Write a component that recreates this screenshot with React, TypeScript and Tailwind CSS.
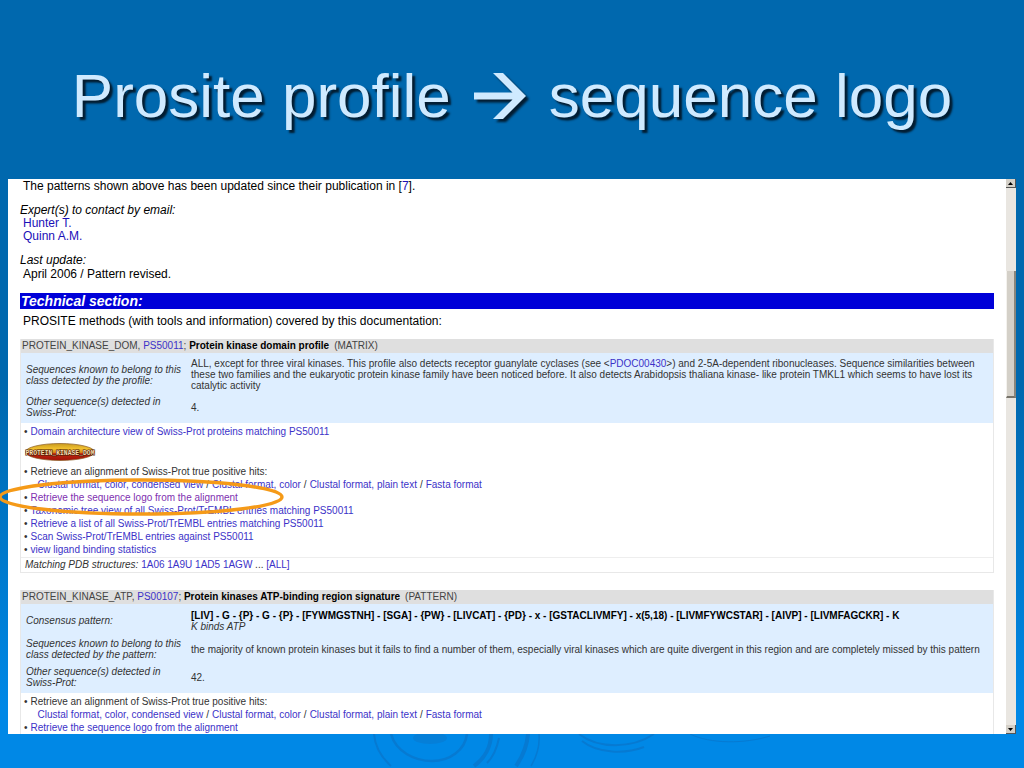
import React from "react";

function Link({ children, tone = "text-[#3c32c8]" }: { children: React.ReactNode; tone?: string }) {
  return (
    <a href="#" className={tone}>
      {children}
    </a>
  );
}

function SectionHeader({ id, accession, name, kind }: { id: string; accession: string; name: string; kind: string }) {
  return (
    <h2 className="flex h-[14px] items-center gap-[5px] whitespace-nowrap bg-[#dfdfdf] pl-px text-[10px] leading-[12px] text-[#444]">
      <span>
        {id}, <Link>{accession}</Link>; <b className="text-black">{name}</b>
      </span>
      <span>({kind})</span>
    </h2>
  );
}

function Row({ label, children, height }: { label: string; children: React.ReactNode; height: string }) {
  return (
    <tr className={height}>
      <th scope="row" className="w-[170px] py-0 pl-[5px] pr-1 text-left align-middle font-normal italic">
        {label}
      </th>
      <td className="py-0 pr-2 align-middle">{children}</td>
    </tr>
  );
}

function Bullet({ children }: { children: React.ReactNode }) {
  return (
    <li className="flex gap-[3px]">
      <span>•</span>
      <span>{children}</span>
    </li>
  );
}

function Formats() {
  return (
    <div className="flex gap-[3px] pl-[7px]">
      <Link>Clustal format, color, condensed view</Link>
      <span>/</span>
      <Link>Clustal format, color</Link>
      <span>/</span>
      <Link>Clustal format, plain text</Link>
      <span>/</span>
      <Link>Fasta format</Link>
    </div>
  );
}

function DomainPill() {
  return (
    <svg width="72" height="18" viewBox="0 0 72 18" role="img" aria-label="Protein kinase domain">
      <defs>
        <linearGradient id="pill" x1="0" y1="0" x2="0" y2="1">
          <stop offset="0" stopColor="#c89a20" />
          <stop offset="0.3" stopColor="#f0c030" />
          <stop offset="0.52" stopColor="#d88a18" />
          <stop offset="0.6" stopColor="#c02a10" />
          <stop offset="1" stopColor="#a01008" />
        </linearGradient>
      </defs>
      <ellipse cx="36" cy="9" rx="34.5" ry="8.5" fill="url(#pill)" stroke="#8a5a20" strokeWidth="0.7" />
      <text x="36" y="11.5" textAnchor="middle" fontFamily="Liberation Mono, monospace" fontWeight="bold" fontSize="6.4" fill="#f6dcae" stroke="#4a1c08" strokeWidth="1.2" paintOrder="stroke">
        PROTEIN_KINASE_DOM
      </text>
    </svg>
  );
}

function Arrow() {
  return (
    <svg width="52" height="50" viewBox="0 0 52 50" role="img" aria-label="to" className="overflow-visible drop-shadow-[3px_3px_1px_#021c30]">
      <path d="M19 2H29L52 25L29 48H19L38.5 28.5H0V21.5H38.5Z" fill="#cfeaff" />
    </svg>
  );
}

function Scrollbar() {
  return (
    <div className="flex w-2.5 shrink-0 flex-col bg-[#e9e6e1]">
      <button aria-label="Scroll up" className="flex h-[9px] items-center justify-center border-b border-r border-[#555] bg-[#d4d0c8]">
        <svg width="5" height="3" viewBox="0 0 5 3"><path d="M0 3L2.5 0L5 3Z" /></svg>
      </button>
      <div className="grow-[83]" />
      <div className="grow-[126] border-b-2 border-l border-r-2 border-b-[#77736a] border-l-[#f4f2ee] border-r-[#8a867c] bg-[#d4d0c8]" />
      <div className="grow-[328]" />
      <button aria-label="Scroll down" className="flex h-[9px] items-center justify-center border-b border-r border-[#555] bg-[#d4d0c8]">
        <svg width="5" height="3" viewBox="0 0 5 3"><path d="M0 0L2.5 3L5 0Z" /></svg>
      </button>
    </div>
  );
}

function Ripples() {
  return (
    <svg viewBox="0 0 684 34" preserveAspectRatio="xMidYMin slice" className="ml-[340px] h-full w-[684px]" fill="none" stroke="#067ad2" aria-hidden="true">
      <ellipse cx="90" cy="4" rx="17" ry="6" fill="#057fd8" stroke="none" />
      <path d="M51 0C56 18 75 27 92 27C110 27 125 16 127 0" strokeWidth="2.5" />
      <path d="M34 0C35 13 42 24 51 32" strokeWidth="2" />
      <path d="M151 0C151 12 145 24 134 32" strokeWidth="4" />
      <path d="M159 4C157 14 153 23 147 29" strokeWidth="2" />
      <path d="M188 0C187 12 183 22 176 32" strokeWidth="4" />
      <path d="M199 0C200 12 197 22 191 32" strokeWidth="1.5" />
      <path d="M239 0C258 15 292 15 314 0" strokeWidth="2" />
      <path d="M242 7C258 20 286 20 304 13" strokeWidth="2" />
      <path d="M350 0C370 10 405 10 430 2" strokeWidth="1" />
    </svg>
  );
}

export default function App() {
  return (
    <div className="relative flex h-screen flex-col overflow-hidden bg-[linear-gradient(to_bottom,#0068ae_0%,#0068ae_50%,#0088e6_92%,#0088e6_100%)] px-2 font-['Liberation_Sans',Arial,sans-serif]">
      <h1 className="flex h-[179px] shrink-0 items-center justify-center gap-[23px] whitespace-nowrap pt-3 text-[62px] leading-none text-[#cfeaff] [text-shadow:3px_3px_2px_#021c30]">
        <span>Prosite profile</span>
        <Arrow />
        <span>sequence logo</span>
      </h1>

      <main className="flex min-h-0 flex-1 bg-white">
        <div className="min-w-0 flex-1 overflow-hidden px-3">
          <div className="text-[12px] leading-[14px] text-black">
            <p className="mb-2.5 pl-[3px]">
              The patterns shown above has been updated since their publication in [<Link tone="text-[#1a10b8]">7</Link>].
            </p>
            <p className="italic">Expert(s) to contact by email:</p>
            <ul className="mb-2.5 pl-[3px] leading-[13px]">
              <li><Link tone="text-[#1a10b8]">Hunter T.</Link></li>
              <li><Link tone="text-[#1a10b8]">Quinn A.M.</Link></li>
            </ul>
            <p className="italic">Last update:</p>
            <p className="mb-3 pl-[3px]">April 2006 / Pattern revised.</p>
          </div>
          <h2 className="h-4 bg-[#0000d8] pl-px text-[14px] font-bold italic leading-4 text-white">Technical section:</h2>
          <p className="mb-[11px] mt-[5px] pl-[3px] text-[12px] leading-[14px] text-black">
            PROSITE methods (with tools and information) covered by this documentation:
          </p>

          <section className="mb-[17px] border border-t-0 border-[#e8e8e8] text-[10px] text-[#333]">
            <SectionHeader id="PROTEIN_KINASE_DOM" accession="PS50011" name="Protein kinase domain profile" kind="MATRIX" />
            <div className="bg-[#deeeff] pb-[5px]">
              <table className="w-full border-collapse leading-[11px]">
                <tbody>
                  <Row label="Sequences known to belong to this class detected by the profile:" height="h-[43px]">
                    ALL, except for three viral kinases. This profile also detects receptor guanylate cyclases (see &lt;<Link>PDOC00430</Link>&gt;) and 2-5A-dependent ribonucleases. Sequence similarities between these two families and the eukaryotic protein kinase family have been noticed before. It also detects Arabidopsis thaliana kinase- like protein TMKL1 which seems to have lost its catalytic activity
                  </Row>
                  <Row label="Other sequence(s) detected in Swiss-Prot:" height="h-[22px]">4.</Row>
                </tbody>
              </table>
            </div>
            <ul className="pl-[3px] pt-0.5 leading-[13px]">
              <Bullet><Link>Domain architecture view of Swiss-Prot proteins matching PS50011</Link></Bullet>
              <li className="flex h-[27px] items-center"><DomainPill /></li>
              <Bullet>
                Retrieve an alignment of Swiss-Prot true positive hits:
                <Formats />
              </Bullet>
              <Bullet><Link tone="text-[#8030b0]">Retrieve the sequence logo from the alignment</Link></Bullet>
              <Bullet><Link>Taxonomic tree view of all Swiss-Prot/TrEMBL entries matching PS50011</Link></Bullet>
              <Bullet><Link>Retrieve a list of all Swiss-Prot/TrEMBL entries matching PS50011</Link></Bullet>
              <Bullet><Link>Scan Swiss-Prot/TrEMBL entries against PS50011</Link></Bullet>
              <Bullet><Link>view ligand binding statistics</Link></Bullet>
            </ul>
            <p className="mt-px border-t border-[#eee] pl-1 leading-[14px]">
              <i>Matching PDB structures:</i> <Link>1A06</Link> <Link>1A9U</Link> <Link>1AD5</Link> <Link>1AGW</Link> ... <Link>[ALL]</Link>
            </p>
          </section>

          <section className="border border-t-0 border-[#e8e8e8] text-[10px] text-[#333]">
            <SectionHeader id="PROTEIN_KINASE_ATP" accession="PS00107" name="Protein kinases ATP-binding region signature" kind="PATTERN" />
            <table className="w-full border-collapse bg-[#deeeff] leading-[11px]">
              <tbody>
                <Row label="Consensus pattern:" height="h-[33px]">
                  <b className="block text-black">[LIV] - G - {"{P}"} - G - {"{P}"} - [FYWMGSTNH] - [SGA] - {"{PW}"} - [LIVCAT] - {"{PD}"} - x - [GSTACLIVMFY] - x(5,18) - [LIVMFYWCSTAR] - [AIVP] - [LIVMFAGCKR] - K</b>
                  <i>K binds ATP</i>
                </Row>
                <Row label="Sequences known to belong to this class detected by the pattern:" height="h-[24px]">
                  the majority of known protein kinases but it fails to find a number of them, especially viral kinases which are quite divergent in this region and are completely missed by this pattern
                </Row>
                <Row label="Other sequence(s) detected in Swiss-Prot:" height="h-[32px]">42.</Row>
              </tbody>
            </table>
            <ul className="pl-[3px] pt-0.5 leading-[13px]">
              <Bullet>
                Retrieve an alignment of Swiss-Prot true positive hits:
                <Formats />
              </Bullet>
              <Bullet><Link>Retrieve the sequence logo from the alignment</Link></Bullet>
            </ul>
          </section>
        </div>
        <Scrollbar />
      </main>

      <footer className="-mx-2 h-[34px] shrink-0 overflow-hidden">
        <Ripples />
      </footer>

      <svg className="pointer-events-none absolute left-0 top-[477px]" width="286" height="40" viewBox="0 0 286 40" fill="none" aria-hidden="true">
        <ellipse cx="141" cy="20" rx="141" ry="17" stroke="#f59a18" strokeWidth="3.4" />
      </svg>
    </div>
  );
}
